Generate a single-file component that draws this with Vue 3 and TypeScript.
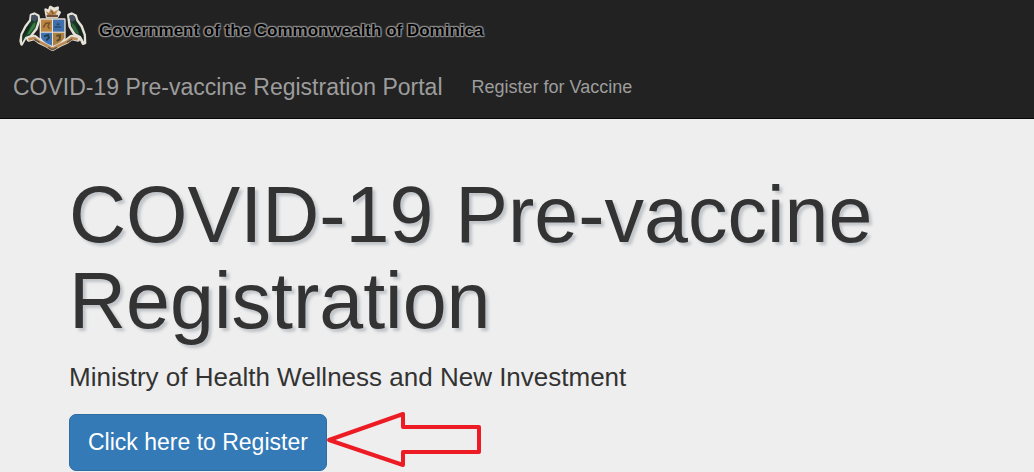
<script setup lang="ts">
interface NavItem {
  label: string
  href: string
}

const navItems: NavItem[] = [{ label: 'Register for Vaccine', href: '#register' }]
</script>

<template>
  <div class="page">
    <header class="navbar">
      <div class="banner">
        <svg class="crest" viewBox="0 0 204 141" role="img" aria-label="Coat of arms of Dominica">
          <g fill="#e6e2d8" stroke="#e6e2d8" stroke-width="8" stroke-linejoin="round" stroke-linecap="round">
            <path d="M36 30 46 26 58 32 60 46 52 72 34 94 18 100 8 118 5 108 8 88 20 64 34 46Z" />
            <path d="M148 30 158 26 170 32 174 46 188 64 197 90 198 114 192 116 184 98 166 88 152 64Z" />
            <path d="M66 44H136V98Q130 114 101 124Q72 114 66 98Z" />
            <path d="M80 14 90 18 94 6 104 12 116 8 114 18 122 22 114 36H84Z" />
            <path d="M30 102 46 97 60 108 80 118 100 130 122 118 144 108 158 97 176 102" fill="none" stroke-width="16" />
          </g>
          <path d="M38 31 48 29 56 35 57 46 49 70 33 91 19 96 9 113 10 90 22 67 36 48Z" fill="#173d29" />
          <path d="M38 31 48 29 56 35 55 44 46 50 36 43Z" fill="#455061" />
          <path d="M50 50 48 66 32 86 24 89 34 70 42 56Z" fill="#347f3b" />
          <path d="M34 52 30 69 14 94 10 108 12 88 23 68Z" fill="#17241e" />
          <path d="M151 32 160 29 168 35 172 48 185 66 194 91 195 110 186 94 169 85 156 64Z" fill="#1b3427" />
          <path d="M151 32 160 29 168 35 169 45 159 50 153 44Z" fill="#455061" />
          <path d="M157 52 167 61 179 82 177 88 168 82 159 66Z" fill="#2c6739" />
          <path d="M172 54 184 70 193 93 192 103 180 83Z" fill="#17241e" />
          <path d="M66 44H99V80H66Z" fill="#bd8742" />
          <path d="M102 44H136V80H102Z" fill="#3f70ad" />
          <path d="M66 83H99V122Q72 112 66 98Z" fill="#3e74b5" />
          <path d="M102 83H136V98Q130 112 102 122Z" fill="#ad8041" />
          <path d="M73 68 80 55 91 54 87 65 92 71" fill="none" stroke="#79552f" stroke-width="5" />
          <path d="M107 66 126 66M113 59 122 57" fill="none" stroke="#294766" stroke-width="5" />
          <path d="M75 94 87 90 90 98 82 106" fill="none" stroke="#273f47" stroke-width="6" />
          <path d="M112 92 123 91 122 103 113 108" fill="none" stroke="#554b32" stroke-width="6" />
          <path d="M80 18 90 24 95 11 105 20 117 14 110 29 87 31Z" fill="#bb8549" />
          <path d="M83 33H117" stroke="#725039" stroke-width="7" />
          <path d="M97 17 103 27" stroke="#815b3b" stroke-width="5" />
          <path d="M28 103 46 99 60 110 80 120 100 132 122 120 144 110 158 99 176 103" fill="none" stroke="#bc8c58" stroke-width="8" stroke-linejoin="round" />
          <path d="M46 103 62 112M144 112 160 102M88 127 100 134 114 127" fill="none" stroke="#65503b" stroke-width="4" />
        </svg>
        <span class="government">Government of the Commonwealth of Dominica</span>
      </div>
      <nav class="nav">
        <a class="brand" href="#home">COVID-19 Pre-vaccine Registration Portal</a>
        <a v-for="item in navItems" :key="item.href" class="nav-link" :href="item.href">{{ item.label }}</a>
      </nav>
    </header>
    <main class="jumbotron">
      <h1>COVID-19 Pre-vaccine Registration</h1>
      <p>Ministry of Health Wellness and New Investment</p>
      <div class="actions">
        <button class="register" type="button">Click here to Register</button>
        <svg class="arrow" viewBox="0 0 156 58" aria-hidden="true">
          <path d="M2 26 76 0V13H152V38H76V51Z" fill="none" stroke="#ed1c24" stroke-width="4" stroke-linejoin="round" />
        </svg>
      </div>
    </main>
  </div>
</template>

<style>
body {
  margin: 0;
  background: #eee;
}
</style>

<style scoped>
.page {
  font-family: "Liberation Sans", Arial, sans-serif;
  color: #333;
}

.navbar {
  background: #222;
  border-bottom: 1px solid #080808;
}

.banner {
  display: flex;
  align-items: center;
  gap: 12px;
  height: 56px;
  padding-left: 19px;
}

.crest {
  width: 68px;
  height: 47px;
}

.government {
  padding-top: 6px;
  color: #000;
  font-size: 17px;
  font-weight: bold;
  line-height: 20px;
  text-shadow: 0 0 2px #aaa, 1px 1px 1px #888, -1px -1px 1px #888, 1px -1px 1px #888, -1px 1px 1px #888;
}

.nav {
  display: flex;
  align-items: center;
  gap: 29px;
  height: 62px;
  padding-left: 13px;
}

.nav a {
  color: #9d9d9d;
  line-height: 26px;
  text-decoration: none;
}

.nav .brand {
  font-size: 23px;
}

.nav .nav-link {
  font-size: 18px;
}

.jumbotron {
  padding: 53px 69px 0;
}

h1 {
  margin: 0;
  font-size: 79px;
  font-weight: normal;
  line-height: 86px;
  text-shadow: 3px 3px 3px #c0c4c8;
}

p {
  margin: 14px 0 18px;
  font-size: 26px;
  line-height: 38px;
}

.actions {
  display: flex;
  align-items: flex-start;
}

.register {
  padding: 12px 18px;
  color: #fff;
  background: #337ab7;
  border: 1px solid #2e6da4;
  border-radius: 7px;
  font-family: inherit;
  font-size: 23px;
  line-height: 31px;
}

.arrow {
  width: 156px;
  height: 58px;
  overflow: visible;
}
</style>
